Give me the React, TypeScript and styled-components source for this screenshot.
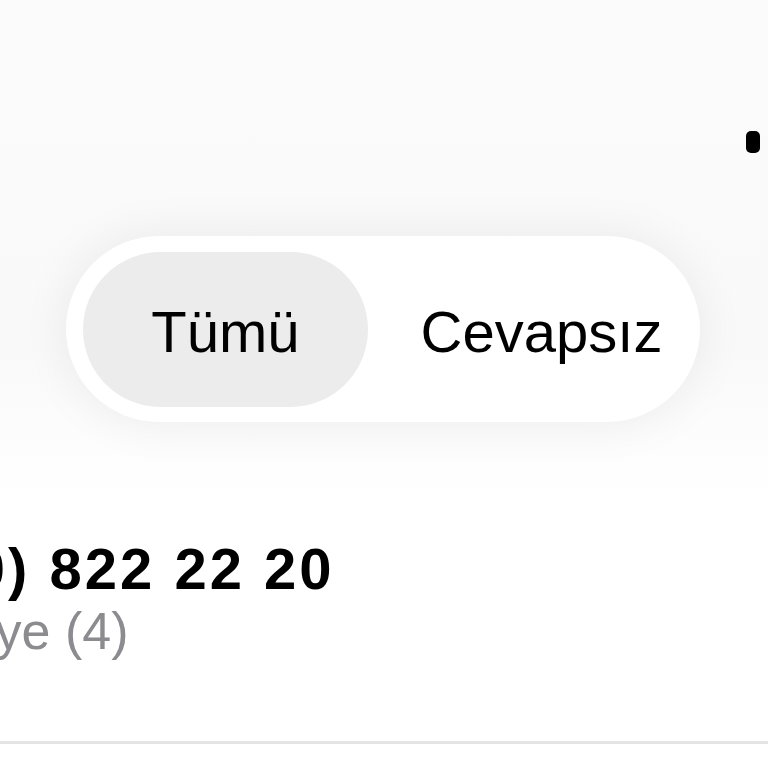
import React from "react";
import styled, { createGlobalStyle } from "styled-components";

const Global = createGlobalStyle`
  html, body { margin: 0; padding: 0; background: #ffffff; }
  body { font-family: "Liberation Sans", Arial, sans-serif; -webkit-font-smoothing: antialiased; }
  * { box-sizing: border-box; }
`;

const Page = styled.div`
  width: 768px;
  height: 768px;
  overflow: hidden;
  display: flex;
  flex-direction: column;
  background: #ffffff;
`;

const Header = styled.div`
  display: flex;
  flex-direction: column;
  height: 500px;
  background: linear-gradient(#fbfbfb 0%, #f9f9f9 70%, #ffffff 100%);
`;

const TopBar = styled.div`
  display: flex;
  justify-content: flex-end;
  padding: 131px 8px 0 0;
  height: 236px;
`;

const Dot = styled.span`
  width: 14px;
  height: 22px;
  border-radius: 5px;
  background: #000;
`;

const Segmented = styled.div`
  align-self: flex-start;
  margin-left: 66px;
  width: 634px;
  height: 186px;
  padding: 16px 16px 15px 17px;
  border-radius: 93px;
  background: #ffffff;
  box-shadow: 0 0 50px rgba(0, 0, 0, 0.07);
  display: grid;
  grid-template-columns: 285px 285px;
  column-gap: 31px;
`;

const Segment = styled.div<{ $active?: boolean }>`
  display: flex;
  align-items: center;
  justify-content: center;
  border-radius: 78px;
  background: ${(p) => (p.$active ? "#ececec" : "transparent")};
  color: #000;
  font-size: 58px;
  font-weight: 400;
  padding-top: 3px;
`;

const List = styled.div`
  display: flex;
  flex-direction: column;
  margin-top: 36px;
`;

const Row = styled.div`
  display: flex;
  flex-direction: column;
  margin-left: -120px;
  padding-bottom: 81px;
  border-bottom: 3px solid #e4e4e4;
`;

const Title = styled.div`
  font-size: 58px;
  font-weight: 700;
  letter-spacing: 3px;
  color: #000;
  line-height: 66px;
  white-space: nowrap;
`;

const Subtitle = styled.div`
  font-size: 52px;
  color: #8c8c90;
  line-height: 58px;
  white-space: nowrap;
`;

export default function App() {
  return (
    <Page>
      <Global />
      <Header>
        <TopBar>
          <Dot />
        </TopBar>
        <Segmented>
          <Segment $active>Tümü</Segment>
          <Segment>Cevapsız</Segment>
        </Segmented>
      </Header>
      <List>
        <Row>
          <Title>(850) 822 22 20</Title>
          <Subtitle>Türkiye (4)</Subtitle>
        </Row>
      </List>
    </Page>
  );
}
